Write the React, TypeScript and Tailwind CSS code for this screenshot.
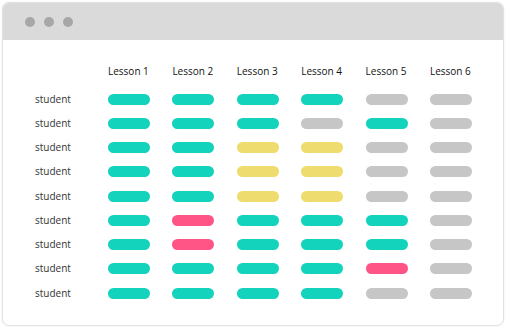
const T = "bg-[#14d3bc]";
const G = "bg-[#c6c6c6]";
const Y = "bg-[#eedd6e]";
const P = "bg-[#ff5586]";

const rows = [
  [T, T, T, T, G, G],
  [T, T, T, G, T, G],
  [T, T, Y, Y, G, G],
  [T, T, Y, Y, G, G],
  [T, T, Y, Y, G, G],
  [T, P, T, T, T, G],
  [T, P, T, T, T, G],
  [T, T, T, T, P, G],
  [T, T, T, T, G, G],
];

const lessons = ["Lesson 1", "Lesson 2", "Lesson 3", "Lesson 4", "Lesson 5", "Lesson 6"];

export default function App() {
  return (
    <div className="w-[506px] h-[329px] bg-white p-[2px] pb-[3px]" style={{ fontFamily: '"Open Sans", sans-serif' }}>
      <div className="h-full rounded-[7px] border border-[#e2e2e2] shadow-[0_0_2px_rgba(0,0,0,0.08)] overflow-hidden bg-white">
        <div className="h-[37px] bg-[#dadada] flex items-center gap-[9px] pl-[22px]">
          <span className="w-[10px] h-[10px] rounded-full bg-[#a7a7a7]" />
          <span className="w-[10px] h-[10px] rounded-full bg-[#a7a7a7]" />
          <span className="w-[10px] h-[10px] rounded-full bg-[#a7a7a7]" />
        </div>
        <div className="pl-[32px] pt-[19px]">
          <div className="grid grid-cols-[73px_repeat(6,64.4px)] h-[24px] items-center mb-[4px]">
            <div />
            {lessons.map((l) => (
              <div key={l} className="text-[10px] text-[#111]">{l}</div>
            ))}
          </div>
          {rows.map((r, i) => (
            <div key={i} className="grid grid-cols-[73px_repeat(6,64.4px)] h-[24.25px] items-center">
              <div className="text-[10px] text-[#333]">student</div>
              {r.map((c, j) => (
                <div key={j} className={`w-[42px] h-[11px] rounded-full ${c}`} />
              ))}
            </div>
          ))}
        </div>
      </div>
    </div>
  );
}
